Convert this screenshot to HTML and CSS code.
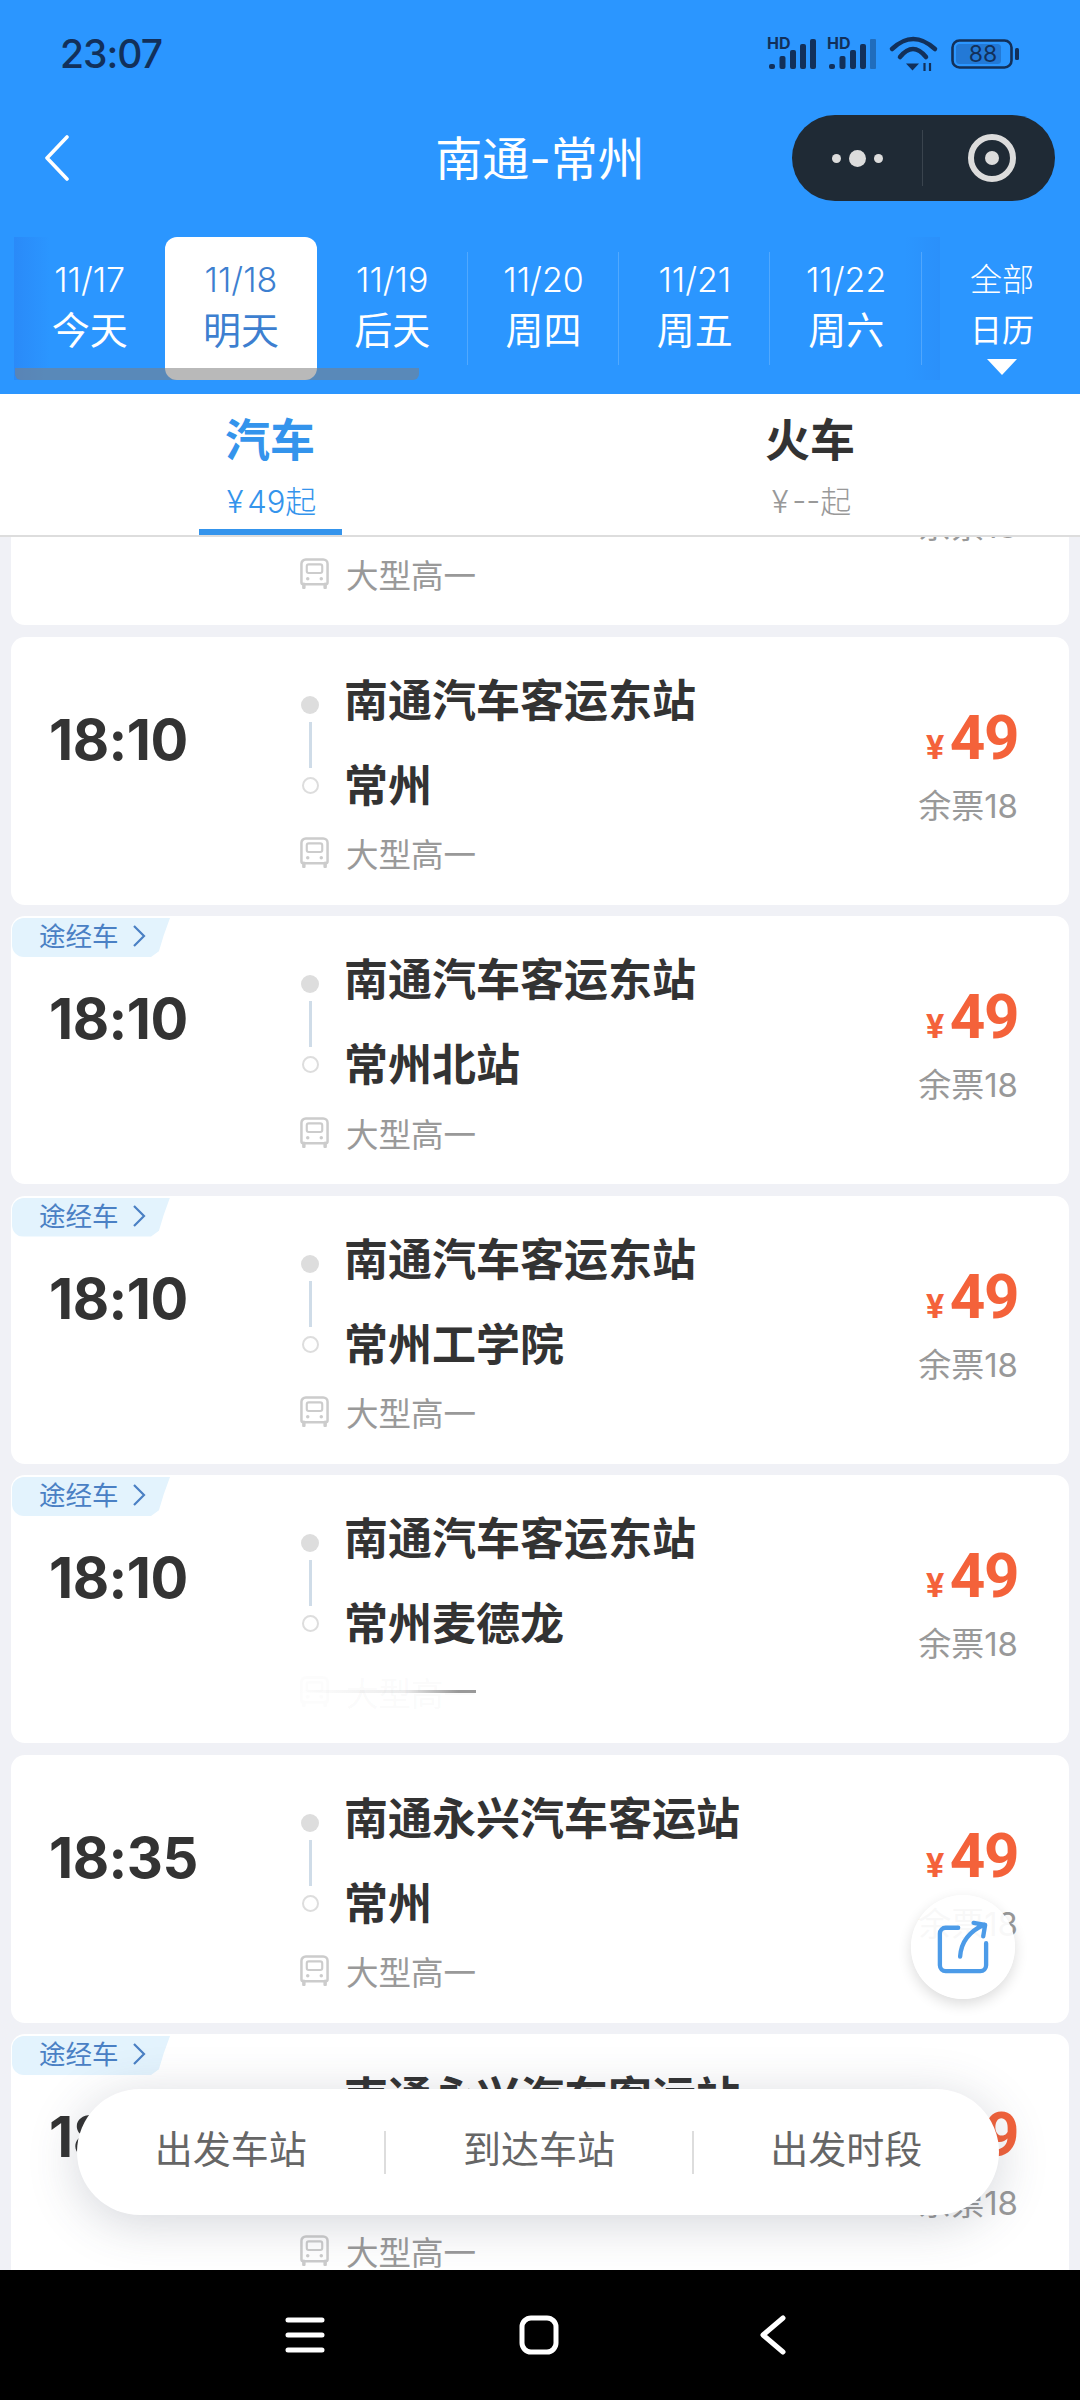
FILE: index.html
```html
<!DOCTYPE html>
<html lang="zh-CN">

<head>
    <meta charset="UTF-8">
    <meta name="viewport" content="width=device-width, initial-scale=1.0">
    <title>南通-常州</title>
    <link rel="stylesheet" href="styles.css">
</head>

<body>
    <svg class="defs" width="0" height="0">
        <symbol id="bus" viewBox="0 0 30 32">
            <path d="M6 1.500h18a4.500 4.500 0 0 1 4.500 4.500v19a2 2 0 0 1-2 2H3.500a2 2 0 0 1-2-2V6A4.500 4.500 0 0 1 6 1.500z" fill="none" stroke="#ccc" stroke-width="2.600"/>
            <rect x="7" y="6.500" width="16" height="9" rx="2" fill="none" stroke="#ccc" stroke-width="2.200"/>
            <circle cx="8" cy="21.500" r="1.800" fill="#ccc"/>
            <circle cx="22" cy="21.500" r="1.800" fill="#ccc"/>
            <path d="M4 27v3.500M26 27v3.500" stroke="#ccc" stroke-width="3.600" stroke-linecap="round"/>
        </symbol>
    </svg>

    <header class="top">
        <div class="status">
            <span class="clock">23:07</span>
            <div class="status-icons">
                <svg width="50" height="34" viewBox="0 0 50 34">
                    <text x="0" y="12" class="hd">HD</text>
                    <rect x="2" y="27" width="6" height="5" rx="2"/>
                    <rect x="12.500" y="19" width="6" height="13" rx="2"/>
                    <rect x="23" y="13" width="6" height="19" rx="2"/>
                    <rect x="33" y="7" width="6" height="25" rx="2"/>
                    <rect x="43" y="2" width="6" height="30" rx="2"/>
                </svg>
                <svg width="50" height="34" viewBox="0 0 50 34">
                    <text x="0" y="12" class="hd">HD</text>
                    <rect x="2" y="27" width="6" height="5" rx="2"/>
                    <rect x="12.500" y="19" width="6" height="13" rx="2"/>
                    <rect x="23" y="13" width="6" height="19" rx="2"/>
                    <rect x="33" y="7" width="6" height="25" rx="2"/>
                    <rect x="43" y="2" width="6" height="30" rx="1" opacity=".4"/>
                </svg>
                <svg width="46" height="34" viewBox="0 0 46 34">
                    <path d="M2 12Q23-8 45 12M10 20Q23 4 36 20" fill="none" stroke="#12305a" stroke-width="4.500" stroke-linecap="round"/>
                    <path d="M16 26.500h13L22.500 33.500z"/>
                    <path d="M34.500 34v-8M40 26v8" fill="none" stroke="#12305a" stroke-width="2.200"/>
                </svg>
                <svg width="68" height="30" viewBox="0 0 68 30">
                    <rect x="1.500" y="1.500" width="59" height="27" rx="7" fill="none" stroke="#12305a" stroke-width="2.600"/>
                    <rect x="5" y="5" width="45" height="20" rx="3.500" fill="#2379d6"/>
                    <text x="32" y="23" class="batt">88</text>
                    <rect x="64" y="9" width="4" height="12" rx="1.500"/>
                </svg>
            </div>
        </div>

        <div class="titlebar">
            <svg class="back" width="26" height="46" viewBox="0 0 26 46">
                <path d="M23 2L3 23l20 21" fill="none" stroke="#fff" stroke-width="3.600" stroke-linecap="round" stroke-linejoin="round"/>
            </svg>
            <h1 class="title">南通-常州</h1>
            <div class="capsule">
                <div class="capsule-dots"><i></i><i class="big"></i><i></i></div>
                <div class="capsule-close"><i></i></div>
            </div>
        </div>

        <div class="dates">
            <div class="date-tab"><span>11/17</span><b>今天</b></div>
            <div class="date-tab active"><span>11/18</span><b>明天</b></div>
            <div class="date-tab ruled"><span>11/19</span><b>后天</b></div>
            <div class="date-tab ruled"><span>11/20</span><b>周四</b></div>
            <div class="date-tab ruled"><span>11/21</span><b>周五</b></div>
            <div class="date-tab ruled"><span>11/22</span><b>周六</b></div>
            <div class="date-all"><span>全部</span><b>日历</b><i></i></div>
            <div class="date-scroll"></div>
        </div>
    </header>

    <nav class="modes">
        <div class="mode active">
            <div class="mode-name">汽车</div>
            <div class="mode-price">¥ 49起</div>
            <div class="mode-line"></div>
        </div>
        <div class="mode">
            <div class="mode-name">火车</div>
            <div class="mode-price">¥ --起</div>
        </div>
    </nav>

    <main class="list">
        <div class="cards">
            <section class="card">
                <div class="time">18:10</div>
                <div class="route">
                    <div class="rail"><i class="dot"></i><i class="bar"></i><i class="ring"></i></div>
                    <div class="stops"><p>南通汽车客运东站</p><p>常州</p></div>
                    <div class="bus"><svg width="29" height="31"><use href="#bus"/></svg>大型高一</div>
                </div>
                <div class="price"><div class="amount"><small>¥</small>49</div><div class="left">余票18</div></div>
            </section>

            <section class="card">
                <div class="time">18:10</div>
                <div class="route">
                    <div class="rail"><i class="dot"></i><i class="bar"></i><i class="ring"></i></div>
                    <div class="stops"><p>南通汽车客运东站</p><p>常州</p></div>
                    <div class="bus"><svg width="29" height="31"><use href="#bus"/></svg>大型高一</div>
                </div>
                <div class="price"><div class="amount"><small>¥</small>49</div><div class="left">余票18</div></div>
            </section>

            <section class="card">
                <div class="tag">途经车<svg width="14" height="24" viewBox="0 0 14 24"><path d="M2 2l10 10-10 10" fill="none" stroke="#4a80c4" stroke-width="2.200"/></svg></div>
                <div class="time">18:10</div>
                <div class="route">
                    <div class="rail"><i class="dot"></i><i class="bar"></i><i class="ring"></i></div>
                    <div class="stops"><p>南通汽车客运东站</p><p>常州北站</p></div>
                    <div class="bus"><svg width="29" height="31"><use href="#bus"/></svg>大型高一</div>
                </div>
                <div class="price"><div class="amount"><small>¥</small>49</div><div class="left">余票18</div></div>
            </section>

            <section class="card">
                <div class="tag">途经车<svg width="14" height="24" viewBox="0 0 14 24"><path d="M2 2l10 10-10 10" fill="none" stroke="#4a80c4" stroke-width="2.200"/></svg></div>
                <div class="time">18:10</div>
                <div class="route">
                    <div class="rail"><i class="dot"></i><i class="bar"></i><i class="ring"></i></div>
                    <div class="stops"><p>南通汽车客运东站</p><p>常州工学院</p></div>
                    <div class="bus"><svg width="29" height="31"><use href="#bus"/></svg>大型高一</div>
                </div>
                <div class="price"><div class="amount"><small>¥</small>49</div><div class="left">余票18</div></div>
            </section>

            <section class="card">
                <div class="tag">途经车<svg width="14" height="24" viewBox="0 0 14 24"><path d="M2 2l10 10-10 10" fill="none" stroke="#4a80c4" stroke-width="2.200"/></svg></div>
                <div class="time">18:10</div>
                <div class="route">
                    <div class="rail"><i class="dot"></i><i class="bar"></i><i class="ring"></i></div>
                    <div class="stops"><p>南通汽车客运东站</p><p>常州麦德龙</p></div>
                    <div class="bus ghost"><svg width="29" height="31"><use href="#bus"/></svg>大型高一</div>
                </div>
                <div class="price"><div class="amount"><small>¥</small>49</div><div class="left">余票18</div></div>
            </section>

            <section class="card">
                <div class="time">18:35</div>
                <div class="route">
                    <div class="rail"><i class="dot"></i><i class="bar"></i><i class="ring"></i></div>
                    <div class="stops"><p>南通永兴汽车客运站</p><p>常州</p></div>
                    <div class="bus"><svg width="29" height="31"><use href="#bus"/></svg>大型高一</div>
                </div>
                <div class="price"><div class="amount"><small>¥</small>49</div><div class="left">余票18</div></div>
            </section>

            <section class="card">
                <div class="tag">途经车<svg width="14" height="24" viewBox="0 0 14 24"><path d="M2 2l10 10-10 10" fill="none" stroke="#4a80c4" stroke-width="2.200"/></svg></div>
                <div class="time">18:35</div>
                <div class="route">
                    <div class="rail"><i class="dot"></i><i class="bar"></i><i class="ring"></i></div>
                    <div class="stops"><p>南通永兴汽车客运站</p><p>常州北站</p></div>
                    <div class="bus"><svg width="29" height="31"><use href="#bus"/></svg>大型高一</div>
                </div>
                <div class="price"><div class="amount"><small>¥</small>49</div><div class="left">余票18</div></div>
            </section>
        </div>

        <button class="share">
            <svg width="52" height="54" viewBox="0 0 54 56">
                <path d="M22 8H9a6 6 0 0 0-6 6v33a6 6 0 0 0 6 6h36a6 6 0 0 0 6-6V24" fill="none" stroke="#4c9be8" stroke-width="4.500" stroke-linecap="round"/>
                <path d="M24 38C25 24 33 12 49 5M38 3l12 2-2 12" fill="none" stroke="#4c9be8" stroke-width="4.500" stroke-linecap="round" stroke-linejoin="round"/>
            </svg>
        </button>

        <div class="filters">
            <span>出发车站</span>
            <span>到达车站</span>
            <span>出发时段</span>
        </div>
    </main>

    <footer class="softkeys">
        <svg width="40" height="40" viewBox="0 0 40 40">
            <path d="M3 5h34M3 20h34M3 35h34" stroke="#fff" stroke-width="5" stroke-linecap="round"/>
        </svg>
        <svg width="40" height="40" viewBox="0 0 40 40">
            <rect x="3" y="3" width="34" height="34" rx="9" fill="none" stroke="#fff" stroke-width="5"/>
        </svg>
        <svg width="40" height="40" viewBox="0 0 40 40">
            <path d="M30 3L10 20l20 17" fill="none" stroke="#fff" stroke-width="5" stroke-linecap="round" stroke-linejoin="round"/>
        </svg>
    </footer>
</body>

</html>
```

FILE: styles.css
```css
* {
    margin: 0;
    padding: 0;
    box-sizing: border-box;
}

body {
    width: 1080px;
    height: 2400px;
    display: flex;
    flex-direction: column;
    overflow: hidden;
    background-color: #f0f1f6;
    font-family: Inter, "Noto Sans CJK SC", sans-serif;
    color: #333;
}

i {
    display: block;
}

.defs {
    position: absolute;
}

/* blue header */
.top {
    height: 394px;
    background-color: #2b96ff;
    color: #fff;
}

.status {
    height: 107px;
    display: flex;
    align-items: center;
    justify-content: space-between;
    padding: 0 61px 0 60px;
}

.clock {
    font-size: 39px;
    font-weight: 500;
    letter-spacing: -1px;
    color: #12305a;
}

.status-icons {
    display: flex;
    align-items: center;
    gap: 10px;
    fill: #12305a;
}

.status-icons svg {
    overflow: visible;
}

.status-icons svg:nth-child(3) {
    margin-left: 3px;
}

.status-icons svg:nth-child(4) {
    margin-left: 5px;
}

.hd {
    font-size: 16px;
    font-weight: 700;
}

.batt {
    font-size: 23px;
    text-anchor: middle;
}

.titlebar {
    display: grid;
    grid-template-columns: 1fr auto 1fr;
    align-items: center;
    height: 86px;
    margin-top: 8px;
    padding: 0 25px;
}

.back {
    margin-left: 19px;
}

.title {
    padding-bottom: 6px;
    font-size: 47px;
    font-weight: 400;
}

.capsule {
    justify-self: end;
    width: 263px;
    height: 86px;
    display: flex;
    align-items: center;
    background-color: #1f2a35;
    border-radius: 43px;
}

.capsule-dots {
    width: 131px;
    height: 56px;
    display: flex;
    align-items: center;
    justify-content: center;
    gap: 8px;
    border-right: 1px solid #3a444e;
}

.capsule-dots i {
    width: 9px;
    height: 9px;
    border-radius: 50%;
    background-color: #dcdcdc;
}

.capsule-dots i.big {
    width: 17px;
    height: 17px;
}

.capsule-close {
    width: 48px;
    height: 48px;
    margin-left: 45px;
    padding: 11px;
    border: 6px solid #dcdcdc;
    border-radius: 50%;
}

.capsule-close i {
    width: 14px;
    height: 14px;
    border-radius: 50%;
    background-color: #dcdcdc;
}

.dates {
    position: relative;
    display: flex;
    height: 143px;
    margin-top: 36px;
    padding-left: 14px;
    background:
        linear-gradient(to right, #2a8af8, #2b96ff) 14px 0 / 36px 100% no-repeat,
        linear-gradient(to left, #2b90fa, #2b96ff) 905px 0 / 35px 100% no-repeat;
}

.date-tab {
    position: relative;
    width: 151.300px;
    display: flex;
    flex-direction: column;
    align-items: center;
    padding-top: 23px;
    border-radius: 12px;
}

.date-tab span,
.date-all span {
    height: 40px;
    line-height: 40px;
    font-size: 34px;
    font-weight: 300;
}

.date-tab b,
.date-all b {
    height: 50px;
    margin-top: 5px;
    line-height: 50px;
    font-size: 38px;
    font-weight: 400;
}

.date-tab.active {
    background-color: #fff;
    color: #3d7fd0;
}

.date-tab.ruled::after {
    content: "";
    position: absolute;
    right: 0;
    top: 15px;
    height: 113px;
    border-right: 1px solid rgba(255, 255, 255, .18);
}

.date-all {
    flex: 1;
    display: flex;
    flex-direction: column;
    align-items: center;
    padding: 23px 0 0 2px;
}

.date-all span {
    font-size: 32px;
}

.date-all b {
    margin-top: 6px;
    font-size: 32px;
}

.date-all i {
    width: 0;
    height: 0;
    margin-top: 3px;
    border-left: 15px solid transparent;
    border-right: 15px solid transparent;
    border-top: 16px solid #fff;
}

.date-scroll {
    position: absolute;
    left: 15px;
    bottom: 0;
    width: 404px;
    height: 12px;
    border-radius: 0 0 6px 6px;
    background-color: rgba(128, 128, 128, .55);
}

/* bus / train switch */
.modes {
    display: grid;
    grid-template-columns: 1fr 1fr;
    height: 143px;
    background-color: #fff;
    border-bottom: 2px solid #ddd;
}

.mode {
    display: flex;
    flex-direction: column;
    align-items: center;
    padding-top: 17px;
}

.mode-name {
    height: 60px;
    line-height: 60px;
    font-size: 45px;
    font-weight: 700;
}

.mode-price {
    height: 40px;
    margin-top: 11px;
    padding-left: 3px;
    line-height: 40px;
    font-size: 31px;
    font-weight: 300;
    word-spacing: -5px;
    color: #999;
}

.mode.active .mode-name,
.mode.active .mode-price {
    color: #3494ec;
}

.mode-line {
    width: 143px;
    height: 6px;
    margin-top: 7px;
    background-color: #3494ec;
}

/* result list */
.list {
    position: relative;
    flex: 1;
    overflow: hidden;
}

.cards {
    display: flex;
    flex-direction: column;
    gap: 11.500px;
    margin-top: -180px;
    padding: 0 11px;
}

.card {
    position: relative;
    display: flex;
    flex: none;
    height: 268px;
    padding: 0 51px 0 38px;
    background-color: #fff;
    border-radius: 14px;
}

.tag {
    position: absolute;
    left: 1px;
    top: 2px;
    width: 158px;
    height: 39px;
    display: flex;
    align-items: center;
    gap: 13px;
    padding: 0 0 3px 27px;
    line-height: 34px;
    font-size: 26.500px;
    color: #4a80c4;
    background-color: #e3f3fd;
    border-radius: 12px 0 0 12px;
    clip-path: polygon(0 0, 100% 0, 96% 45%, 93% 85%, 88% 100%, 0 100%);
}

.time {
    width: 250px;
    padding-top: 69px;
    line-height: 68px;
    font-size: 56px;
    font-weight: 700;
    letter-spacing: -.500px;
}

.route {
    flex: 1;
    display: grid;
    grid-template-columns: 22px 1fr;
    grid-template-rows: 192px 40px;
    column-gap: 23px;
    align-content: start;
    padding-top: 22px;
}

.rail {
    display: flex;
    flex-direction: column;
    align-items: center;
    padding-top: 37px;
}

.dot {
    width: 18px;
    height: 18px;
    border-radius: 50%;
    background-color: #ddd;
}

.bar {
    width: 3px;
    height: 46px;
    margin-top: 8px;
    background-color: #cfdce8;
}

.ring {
    width: 17px;
    height: 17px;
    margin-top: 9px;
    border: 2px solid #ddd;
    border-radius: 50%;
}

.stops {
    font-size: 44px;
    font-weight: 700;
}

.stops p {
    height: 85px;
    line-height: 85px;
    white-space: nowrap;
}

.bus {
    position: relative;
    grid-column: 1 / -1;
    display: flex;
    align-items: center;
    gap: 17px;
    height: 40px;
    margin-top: -18px;
    padding-left: 1px;
    font-size: 32.500px;
    color: #999;
}

.bus.ghost {
    color: rgba(153, 153, 153, .05);
}

.bus.ghost svg {
    opacity: .05;
}

.bus.ghost::after {
    content: "";
    position: absolute;
    left: 0;
    top: 19px;
    width: 177px;
    height: 3px;
    background: linear-gradient(to right, rgba(153, 153, 153, 0), rgba(153, 153, 153, .2) 60%, #999 90%);
}

.price {
    display: flex;
    flex-direction: column;
    align-items: flex-end;
    padding-top: 66px;
}

.amount {
    height: 70px;
    line-height: 70px;
    font-family: Roboto, sans-serif;
    font-size: 62px;
    font-weight: 700;
    letter-spacing: -1.500px;
    color: #f4623a;
}

.amount small {
    margin-right: 7px;
    font-size: 34px;
}

.left {
    height: 40px;
    margin-top: 13px;
    line-height: 40px;
    font-size: 33px;
    color: #999;
    white-space: nowrap;
}

/* things floating over the list */
.share {
    position: absolute;
    left: 911px;
    top: 1358px;
    width: 104px;
    height: 104px;
    display: flex;
    align-items: center;
    justify-content: center;
    border: 0;
    border-radius: 50%;
    background-color: rgba(255, 255, 255, .93);
    box-shadow: 0 5px 14px rgba(0, 0, 0, .14);
}

.filters {
    position: absolute;
    left: 77px;
    top: 1552px;
    width: 922px;
    height: 126px;
    display: grid;
    grid-template-columns: repeat(3, 1fr);
    align-items: center;
    text-align: center;
    font-size: 38px;
    color: #666;
    background-color: #fff;
    border-radius: 63px;
    box-shadow: 0 8px 50px rgba(60, 70, 90, .22);
}

.filters span {
    height: 43px;
    line-height: 36px;
}

.filters span + span {
    border-left: 2px solid #ddd;
}

.softkeys {
    flex: none;
    height: 130px;
    display: flex;
    align-items: center;
    justify-content: center;
    gap: 194px;
    padding-right: 3px;
    background-color: #000;
}
```
